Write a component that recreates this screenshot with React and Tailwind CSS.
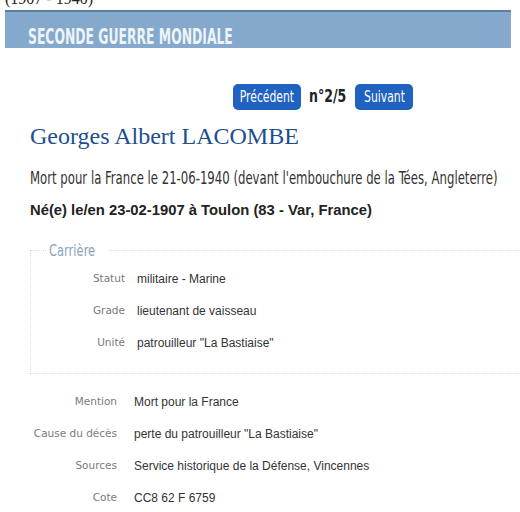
import React from 'react';

const carriere = [
    { label: 'Statut', value: 'militaire - Marine' },
    { label: 'Grade', value: 'lieutenant de vaisseau' },
    { label: 'Unité', value: 'patrouilleur "La Bastiaise"' },
];

const details = [
    { label: 'Mention', value: 'Mort pour la France' },
    { label: 'Cause du décès', value: 'perte du patrouilleur "La Bastiaise"' },
    { label: 'Sources', value: 'Service historique de la Défense, Vincennes' },
    { label: 'Cote', value: 'CC8 62 F 6759' },
];

const Row = ({ label, value, wide }) => (
    <div className="flex items-center h-[32px]">
        <div
            className={
                wide
                    ? "w-[117px] shrink-0 text-right text-[10.5px] text-[#7a7a7a] font-['DejaVu_Sans',Verdana,sans-serif]"
                    : "w-[94px] shrink-0 text-right text-[10.5px] text-[#7a7a7a] font-['DejaVu_Sans',Verdana,sans-serif]"
            }
        >
            {label}
        </div>
        <div
            className={
                wide
                    ? "pl-[17px] text-[12px] text-[#333] font-['Liberation_Sans',Arial,sans-serif]"
                    : "pl-[12px] text-[12px] text-[#333] font-['Liberation_Sans',Arial,sans-serif]"
            }
        >
            {value}
        </div>
    </div>
);

const App = () => {
    return (
        <div className="w-[520px] h-[512px] overflow-hidden bg-white">
            <div className="mt-[-10px] pl-[5px] text-[16px] leading-[18px] text-[#222] font-['Liberation_Serif',serif]">
                (1907 - 1940)
            </div>

            <div className="ml-[5px] w-[506px] h-[38px] mt-[2px] bg-[#84a9cc] border-t-[2px] border-[#5b80a8] flex items-end pl-[23px] pb-[1px]">
                <span className="text-[#eef3f8] font-bold text-[21px] leading-[19px] inline-block origin-left scale-x-[0.655] whitespace-nowrap font-['DejaVu_Sans_Condensed','DejaVu_Sans',sans-serif]">
                    SECONDE GUERRE MONDIALE
                </span>
            </div>

            <div className="flex items-center gap-[8px] mt-[36px] pl-[233px] font-['DejaVu_Sans_Condensed','DejaVu_Sans',sans-serif]">
                <button className="bg-[#1f62c0] text-white rounded-[5px] h-[26px] w-[68px] flex items-center justify-center">
                    <span className="inline-block text-[15px] scale-x-[0.8] whitespace-nowrap">Précédent</span>
                </button>
                <div className="w-[38px] flex justify-center">
                    <span className="inline-block font-bold text-[17px] text-[#222] scale-x-[0.82] whitespace-nowrap">n°2/5</span>
                </div>
                <button className="bg-[#1f62c0] text-white rounded-[5px] h-[26px] w-[58px] flex items-center justify-center">
                    <span className="inline-block text-[15px] scale-x-[0.8] whitespace-nowrap">Suivant</span>
                </button>
            </div>

            <div className="pl-[30px]">
                <h1 className="mt-[11px] text-[24px] leading-[30px] text-[#1d4f8e] font-['Liberation_Serif',serif]">
                    Georges Albert LACOMBE
                </h1>
                <p className="mt-[16px] h-[22px] text-[17px] leading-[22px] text-[#333] whitespace-nowrap">
                    <span className="inline-block origin-left scale-x-[0.765] font-['DejaVu_Sans_Condensed','DejaVu_Sans',sans-serif]">
                        Mort pour la France le 21-06-1940 (devant l'embouchure de la Tées, Angleterre)
                    </span>
                </p>
                <p className="mt-[12px] text-[14.8px] leading-[18px] font-bold text-[#222] font-['Liberation_Sans',Arial,sans-serif]">
                    Né(e) le/en 23-02-1907 à Toulon (83 - Var, France)
                </p>

                <fieldset className="mt-[22px] border border-dotted border-[#dcdcdc] w-[520px] h-[133px] pb-[10px]">
                    <legend className="ml-[16px] px-[2px] h-[18px] text-[16px] leading-[18px] text-[#8ea3b6]">
                        <span className="inline-block origin-left scale-x-[0.8] font-['DejaVu_Sans_Condensed','DejaVu_Sans',sans-serif]">
                            Carrière
                        </span>
                    </legend>
                    <div className="mt-[4px]">
                        {carriere.map((r) => (
                            <Row key={r.label} label={r.label} value={r.value} />
                        ))}
                    </div>
                </fieldset>
            </div>

            <div className="mt-[12px]">
                {details.map((r) => (
                    <Row key={r.label} label={r.label} value={r.value} wide />
                ))}
            </div>
        </div>
    );
};

export default App;
